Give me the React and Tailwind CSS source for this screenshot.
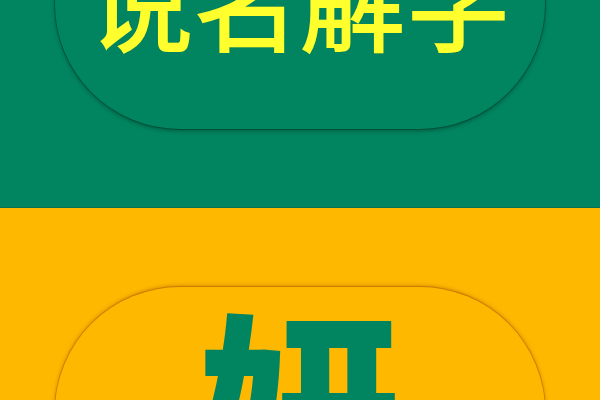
export default function App() {
  const font = { fontFamily: '"Noto Sans CJK SC", "Noto Sans", sans-serif' };
  return (
    <div className="w-[600px] h-[400px] overflow-hidden flex flex-col" style={font}>
      <div className="h-[208px] bg-[#008560] flex justify-center overflow-hidden border-b border-[#0b6f4f] shrink-0">
        <div className="mt-[-121px] h-[250px] w-[490px] shrink-0 rounded-full bg-[#008560] shadow-[0_2px_4px_rgba(0,40,25,0.45),0_0_0_1px_rgba(0,60,40,0.4)] flex items-center justify-center">
          <span className="text-[105px] leading-none font-normal text-[#ffff2e] [-webkit-text-stroke:2px_#ffff2e] tracking-[1px] mt-[-13px] [text-shadow:0_0_2px_#2d6b30]">说名解字</span>
        </div>
      </div>
      <div className="flex-1 bg-[#ffb800] flex justify-center overflow-hidden">
        <div className="mt-[79px] h-[250px] w-[490px] shrink-0 rounded-full bg-[#ffb800] shadow-[0_-1px_4px_rgba(160,80,0,0.55),0_0_0_1px_rgba(200,110,0,0.5)] flex items-center justify-center">
          <span className="text-[200px] leading-none font-black text-[#008560] mt-[-34px]">妍</span>
        </div>
      </div>
    </div>
  );
}
